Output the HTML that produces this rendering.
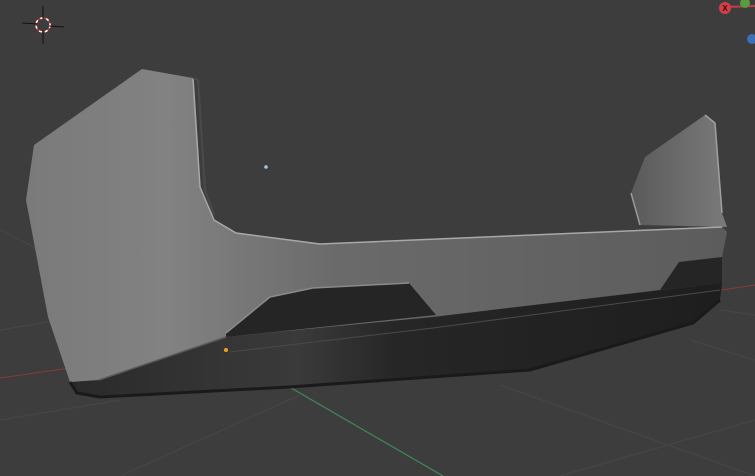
<!DOCTYPE html>
<html><head><meta charset="utf-8"><style>
html,body{margin:0;padding:0;background:#3d3d3d;overflow:hidden}
svg{display:block}
</style></head><body>
<svg width="755" height="476" viewBox="0 0 755 476" xmlns="http://www.w3.org/2000/svg">
<defs>
<linearGradient id="body" x1="0" y1="0" x2="1" y2="0">
<stop offset="0" stop-color="#7a7a7a"/><stop offset="0.2" stop-color="#828282"/><stop offset="0.45" stop-color="#6a6a6a"/><stop offset="1" stop-color="#5c5c5c"/>
</linearGradient>
<linearGradient id="lip" x1="0" y1="0" x2="1" y2="0">
<stop offset="0" stop-color="#2a2a2a"/><stop offset="0.35" stop-color="#3a3a3a"/><stop offset="0.5" stop-color="#262626"/><stop offset="1" stop-color="#1e1e1e"/>
</linearGradient>
<linearGradient id="rw" x1="0" y1="0" x2="1" y2="0">
<stop offset="0" stop-color="#5a5a5a"/><stop offset="1" stop-color="#7a7a7a"/>
</linearGradient>
</defs>
<rect width="755" height="476" fill="#3d3d3d"/>
<g stroke="#474747" stroke-width="1" fill="none">
<line x1="0" y1="230" x2="40" y2="250"/>
<line x1="0" y1="330" x2="60" y2="320"/>
<line x1="0" y1="420" x2="120" y2="400"/>
<line x1="120" y1="476" x2="300" y2="395"/>
<line x1="500" y1="385" x2="755" y2="476"/>
<line x1="560" y1="476" x2="755" y2="420"/>
<line x1="690" y1="340" x2="755" y2="360"/>
<line x1="720" y1="310" x2="755" y2="315"/>
</g>
<line x1="0" y1="378" x2="70" y2="368" stroke="#8a3a3a" stroke-width="1"/>
<line x1="722" y1="290" x2="755" y2="285" stroke="#8a3a3a" stroke-width="1"/>
<line x1="286" y1="385" x2="443" y2="476" stroke="#3f8a5a" stroke-width="1.2"/>
<path d="M631,193 L645,157 L705,115 L715,123 L722,213 L727,227 L640,225 Z" fill="url(#rw)"/>
<path d="M631,193 L640,225" stroke="#9a9a9a" stroke-width="1.5"/>
<path d="M705,115 L715,123 L722,213" stroke="#a0a0a0" stroke-width="1.5" fill="none"/>
<path d="M142,69 L193,78 L200,187 L214,220 L236,233 L320,244 L722,227 L727,232 L722,257 L722,283 L717,283 L433,317 L226,337 L99,380 L77,384 L70,382 L48,317 L26,200 L34,145 Z" fill="url(#body)"/>
<path d="M193,78 L200,187 L214,220 L236,233 L320,244 L722,227" stroke="#a8a8a8" stroke-width="1.5" fill="none"/>
<path d="M193,78 L198,80 L205,190 L214,215" stroke="#4a4a4a" stroke-width="2" fill="none"/>
<path d="M226,333 L270,297 L313,288 L409,283 L436,315 L226,337 Z" fill="#252525"/>
<path d="M226,333 L270,297 L313,288 L409,283" stroke="#8a8a8a" stroke-width="1.5" fill="none"/>
<path d="M660,290 L679,262 L722,257 L722,283 Z" fill="#252525"/>
<path d="M70,382 L99,380 L226,337 L433,317 L722,283 L720,300 L693,323 L530,370 L289,387 L100,397 L77,393 Z" fill="url(#lip)"/>
<path d="M99,380 L226,337" stroke="#5a5a5a" stroke-width="1.5" fill="none"/>
<path d="M230,352 L433,328 L720,290" stroke="#4a4a4a" stroke-width="1" fill="none"/>
<path d="M70,382 L77,393 L100,397 L289,387 L530,370 L693,323 L720,300" stroke="#1a1a1a" stroke-width="3" fill="none"/>
<circle cx="266" cy="167" r="1.8" fill="#9cc8e8"/>
<circle cx="226" cy="350" r="2" fill="#f0a020"/>
<g>
<circle cx="43" cy="25" r="7" fill="none" stroke="#c03030" stroke-width="1.5"/>
<circle cx="43" cy="25" r="7" fill="none" stroke="#fff" stroke-width="1.5" stroke-dasharray="3 3"/>
<line x1="43" y1="6" x2="43" y2="19" stroke="#111"/><line x1="43" y1="31" x2="43" y2="44" stroke="#111"/>
<line x1="22" y1="23" x2="37" y2="24" stroke="#111"/><line x1="49" y1="26" x2="64" y2="27" stroke="#111"/>
</g>
<line x1="725" y1="7" x2="755" y2="6" stroke="#c04040" stroke-width="2"/>
<circle cx="745" cy="3" r="5" fill="#5a9a40"/>
<circle cx="725" cy="8" r="6" fill="#d04048"/>
<text x="725" y="11" font-family="Liberation Sans,sans-serif" font-size="8" fill="#400" text-anchor="middle" font-weight="bold">X</text>
<circle cx="752" cy="39" r="5" fill="#3a70b8"/>
</svg>
</body></html>
